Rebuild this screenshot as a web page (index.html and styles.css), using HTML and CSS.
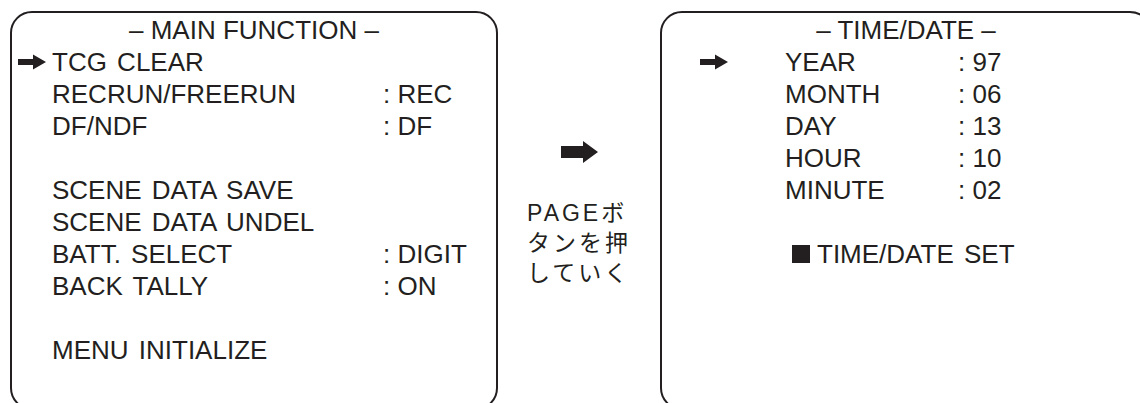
FILE: index.html
```html
<!DOCTYPE html>
<html lang="ja">
<head>
    <meta charset="UTF-8">
    <meta name="viewport" content="width=device-width, initial-scale=1.0">
    <title>MAIN FUNCTION / TIME/DATE</title>
    <link rel="stylesheet" href="styles.css">
</head>
<body>
    <div class="page">
        <!-- メインファンクション画面 -->
        <section class="panel panel-main">
            <h2 class="panel-title">– MAIN FUNCTION –</h2>
            <ul class="menu">
                <li class="row">
                    <span class="pointer">
                        <svg class="arrow-small" viewBox="0 0 28 16"><path d="M0 5H15V0.5L28 8L15 15.5V11H0Z"/></svg>
                    </span>
                    <span class="label">TCG CLEAR</span>
                    <span class="value"></span>
                </li>
                <li class="row"><span class="pointer"></span><span class="label">RECRUN/FREERUN</span><span class="value">: REC</span></li>
                <li class="row"><span class="pointer"></span><span class="label">DF/NDF</span><span class="value">: DF</span></li>
                <li class="row blank"></li>
                <li class="row"><span class="pointer"></span><span class="label">SCENE DATA SAVE</span><span class="value"></span></li>
                <li class="row"><span class="pointer"></span><span class="label">SCENE DATA UNDEL</span><span class="value"></span></li>
                <li class="row"><span class="pointer"></span><span class="label">BATT. SELECT</span><span class="value">: DIGIT</span></li>
                <li class="row"><span class="pointer"></span><span class="label">BACK TALLY</span><span class="value">: ON</span></li>
                <li class="row blank"></li>
                <li class="row"><span class="pointer"></span><span class="label">MENU INITIALIZE</span><span class="value"></span></li>
            </ul>
        </section>

        <!-- 操作の説明 -->
        <div class="guide">
            <svg class="arrow-big" viewBox="0 0 37 22"><path d="M0 5H22V0L37 11L22 22V17H0Z"/></svg>
            <p class="guide-text">PAGEボ<br>タンを押<br>していく</p>
        </div>

        <!-- 時刻・日付画面 -->
        <section class="panel panel-time">
            <h2 class="panel-title">– TIME/DATE –</h2>
            <ul class="menu">
                <li class="row">
                    <span class="pointer">
                        <svg class="arrow-small" viewBox="0 0 28 16"><path d="M0 5H15V0.5L28 8L15 15.5V11H0Z"/></svg>
                    </span>
                    <span class="label">YEAR</span>
                    <span class="value">: 97</span>
                </li>
                <li class="row"><span class="pointer"></span><span class="label">MONTH</span><span class="value">: 06</span></li>
                <li class="row"><span class="pointer"></span><span class="label">DAY</span><span class="value">: 13</span></li>
                <li class="row"><span class="pointer"></span><span class="label">HOUR</span><span class="value">: 10</span></li>
                <li class="row"><span class="pointer"></span><span class="label">MINUTE</span><span class="value">: 02</span></li>
                <li class="row blank"></li>
                <li class="row set-row"><span class="pointer"></span><span class="set-label"><span class="square"></span>TIME/DATE SET</span></li>
            </ul>
        </section>
    </div>
</body>
</html>
```

FILE: styles.css
```css
html, body {
    margin: 0;
    height: 403px;
    overflow: hidden;
    background-color: #ffffff;
}
body {
    font-family: "Liberation Sans", Arial, "Noto Sans CJK JP", sans-serif;
    color: #231f20;
}
.page {
    display: flex;
    align-items: flex-start;
    box-sizing: border-box;
    width: 1140px;
    height: 403px;
    overflow: hidden;
    padding: 11px 0 0 10px;
}
.panel {
    flex-shrink: 0;
    box-sizing: border-box;
    height: 399px;
    border: 2px solid #231f20;
    border-radius: 22px;
    padding-top: 1px;
}
.panel-main {
    width: 488px;
}
.panel-time {
    width: 492px;
}
.panel-title {
    margin: 0;
    font-size: 26px;
    font-weight: normal;
    line-height: 32px;
    text-align: center;
}
.menu {
    list-style: none;
    margin: 0;
    padding: 0;
    font-size: 26px;
    line-height: 32px;
}
.row {
    display: grid;
    height: 32px;
    align-items: center;
    white-space: nowrap;
}
.label, .set-label {
    word-spacing: 3px;
}
.panel-main .row {
    grid-template-columns: 40px 331px auto;
}
.panel-time .row {
    grid-template-columns: 85px 173px auto;
    padding-left: 38px;
}
.panel-time .set-row {
    grid-template-columns: 92px auto;
}
.pointer {
    display: flex;
    align-items: center;
    height: 32px;
}
.panel-main .pointer {
    padding-left: 6px;
}
.arrow-small {
    width: 28px;
    height: 16px;
    fill: #231f20;
}
.set-label {
    display: flex;
    align-items: center;
}
.square {
    flex-shrink: 0;
    width: 18px;
    height: 18px;
    margin-right: 7px;
    background-color: #231f20;
}
.guide {
    flex-shrink: 0;
    width: 162px;
    display: flex;
    flex-direction: column;
    align-items: center;
    padding-top: 130px;
}
.arrow-big {
    width: 37px;
    height: 22px;
    fill: #231f20;
}
.guide-text {
    margin: 35px 0 0;
    font-size: 23px;
    line-height: 30px;
    letter-spacing: 3px;
    text-align: left;
}
```
